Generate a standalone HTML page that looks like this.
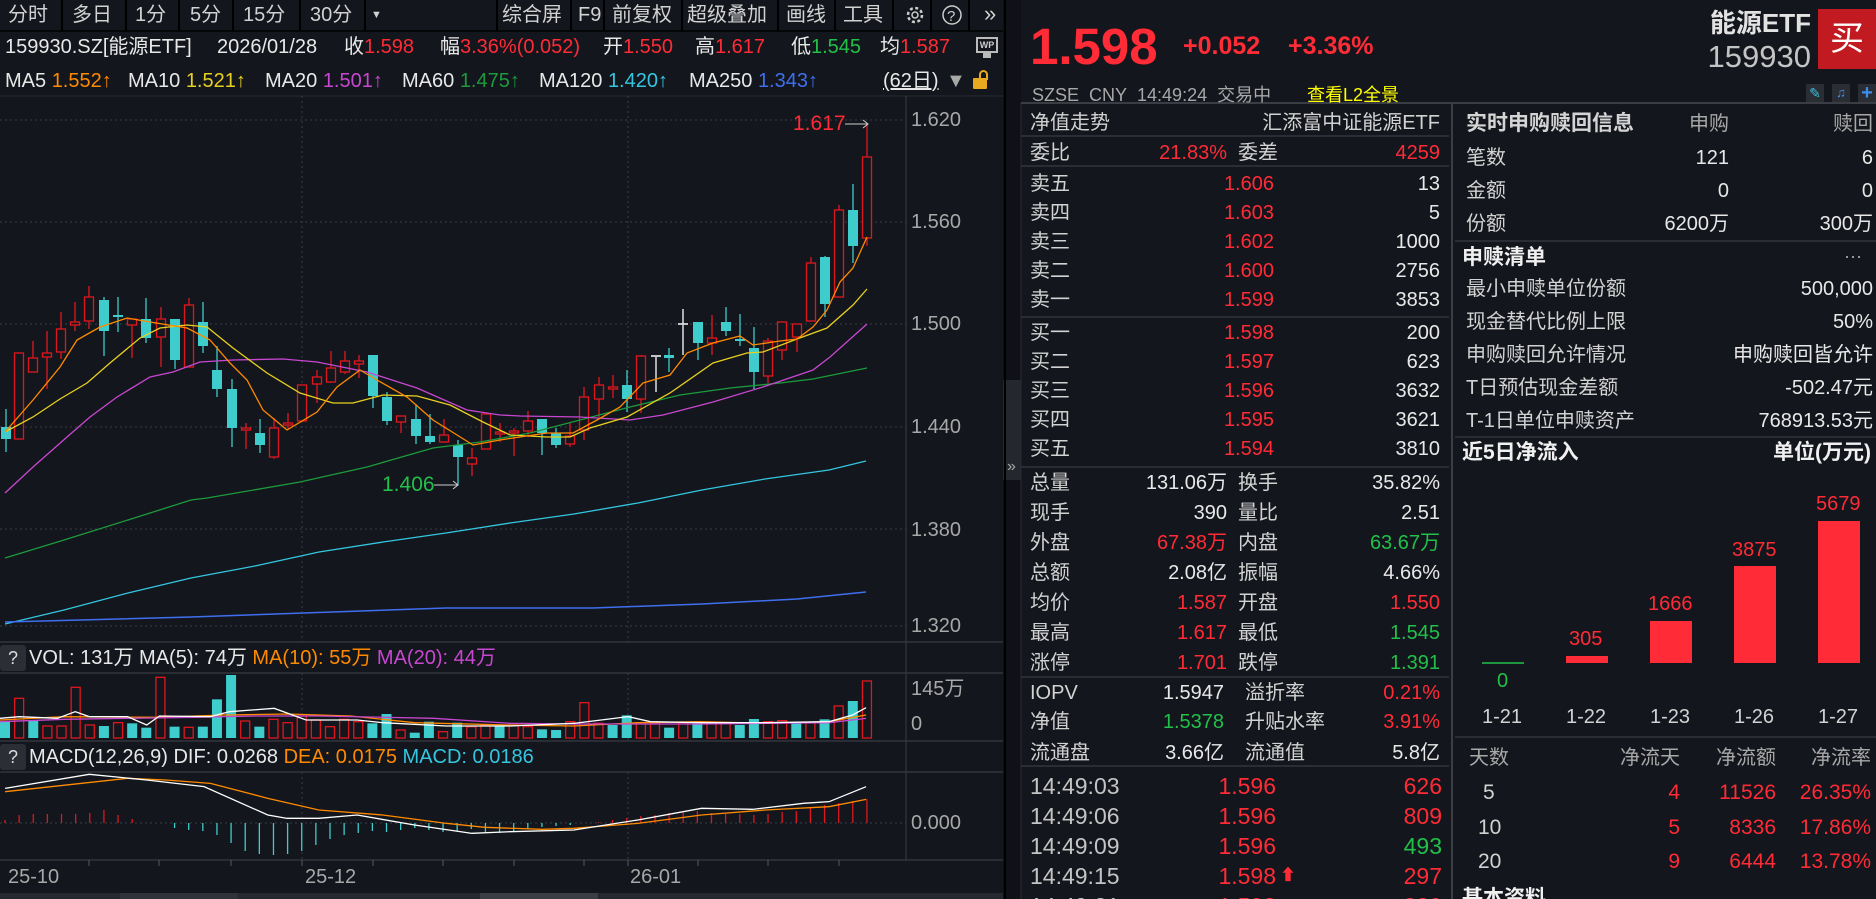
<!DOCTYPE html>
<html><head><meta charset="utf-8">
<style>
*{margin:0;padding:0;box-sizing:border-box}
html,body{width:1876px;height:899px;overflow:hidden;background:#13161c}
#wrap{position:relative;width:1876px;height:899px;overflow:hidden;background:#13161c;font-family:"Liberation Sans","Noto Sans CJK SC",sans-serif;color:#d2d2d2}
.t{position:absolute;white-space:nowrap;line-height:24px;height:24px;font-size:20px}
.r{text-align:right}
.red{color:#ff2b36}.grn{color:#22c04a}.wh{color:#e8e8e8}.gy{color:#a8a8a8}
.b{font-weight:bold}
.o{color:#ff8a00}.y{color:#e8d020}.m{color:#c847d0}.g6{color:#1d9a3c}.c{color:#34c6e0}.bl{color:#3f6ff0}
.q{position:absolute;width:26px;height:26px;background:#2b2e35;border-radius:3px;color:#ddd;font-size:18px;line-height:26px;text-align:center}
svg{position:absolute;left:0;top:0}
</style></head><body><div id="wrap">
<svg id="ch" width="1876" height="899"></svg>

<!-- toolbar -->
<div class="t" style="left:8px;top:3px">分时</div>
<div class="t" style="left:72px;top:3px">多日</div>
<div class="t" style="left:135px;top:3px">1分</div>
<div class="t" style="left:190px;top:3px">5分</div>
<div class="t" style="left:243px;top:3px">15分</div>
<div class="t" style="left:310px;top:3px">30分</div>
<div class="t" style="left:371px;top:3px;font-size:11px">▼</div>
<div class="t" style="left:502px;top:3px">综合屏</div>
<div class="t" style="left:578px;top:3px">F9</div>
<div class="t" style="left:612px;top:3px">前复权</div>
<div class="t" style="left:687px;top:3px">超级叠加</div>
<div class="t" style="left:786px;top:3px">画线</div>
<div class="t" style="left:843px;top:3px">工具</div>
<div class="t" style="left:984px;top:2px;font-size:22px">»</div>

<!-- info row -->
<div class="t wh" style="left:5px;top:35px">159930.SZ[能源ETF]</div>
<div class="t wh" style="left:217px;top:35px">2026/01/28</div>
<div class="t wh" style="left:344px;top:35px">收<span class="red">1.598</span></div>
<div class="t wh" style="left:440px;top:35px">幅<span class="red">3.36%(0.052)</span></div>
<div class="t wh" style="left:603px;top:35px">开<span class="red">1.550</span></div>
<div class="t wh" style="left:695px;top:35px">高<span class="red">1.617</span></div>
<div class="t wh" style="left:791px;top:35px">低<span class="grn">1.545</span></div>
<div class="t wh" style="left:880px;top:35px">均<span class="red">1.587</span></div>
<div style="position:absolute;left:976px;top:37px;width:22px;height:16px;border:2px solid #bbb;font-size:9px;line-height:12px;text-align:center;font-weight:bold;color:#ccc">WP</div>
<div style="position:absolute;left:983px;top:53px;width:8px;height:5px;background:#bbb"></div>

<!-- MA row -->
<div class="t wh" style="left:5px;top:69px">MA5 <span class="o">1.552↑</span></div>
<div class="t wh" style="left:128px;top:69px">MA10 <span class="y">1.521↑</span></div>
<div class="t wh" style="left:265px;top:69px">MA20 <span class="m">1.501↑</span></div>
<div class="t wh" style="left:402px;top:69px">MA60 <span class="g6">1.475↑</span></div>
<div class="t wh" style="left:539px;top:69px">MA120 <span class="c">1.420↑</span></div>
<div class="t wh" style="left:689px;top:69px">MA250 <span class="bl">1.343↑</span></div>
<div class="t wh" style="left:883px;top:69px;text-decoration:underline">(62日)</div>
<div class="t gy" style="left:946px;top:69px;font-size:20px">▼</div>
<div style="position:absolute;left:973px;top:78px;width:14px;height:11px;background:#e8a820;border-radius:1px"></div>
<div style="position:absolute;left:979px;top:70px;width:9px;height:10px;border:2px solid #e8a820;border-bottom:none;border-radius:5px 5px 0 0"></div>

<!-- axis labels -->
<div class="t gy" style="left:911px;top:108px">1.620</div>
<div class="t gy" style="left:911px;top:210px">1.560</div>
<div class="t gy" style="left:911px;top:312px">1.500</div>
<div class="t gy" style="left:911px;top:415px">1.440</div>
<div class="t gy" style="left:911px;top:518px">1.380</div>
<div class="t gy" style="left:911px;top:614px">1.320</div>
<div class="t red" style="left:793px;top:112px;font-size:21px">1.617</div>
<div class="t grn" style="left:382px;top:473px;font-size:21px">1.406</div>

<!-- vol header -->
<div class="q" style="left:0;top:645px">?</div>
<div class="t wh" style="left:29px;top:646px">VOL: 131万 MA(5): 74万 <span class="o">MA(10): 55万</span> <span class="m">MA(20): 44万</span></div>
<div class="t gy" style="left:911px;top:677px">145万</div>
<div class="t gy" style="left:911px;top:712px">0</div>
<div class="q" style="left:0;top:744px">?</div>
<div class="t wh" style="left:29px;top:745px">MACD(12,26,9) DIF: 0.0268 <span class="o">DEA: 0.0175</span> <span class="c">MACD: 0.0186</span></div>
<div class="t gy" style="left:911px;top:811px">0.000</div>
<div class="t gy" style="left:8px;top:865px">25-10</div>
<div class="t gy" style="left:305px;top:865px">25-12</div>
<div class="t gy" style="left:630px;top:865px">26-01</div>

<!-- right top -->
<div class="t red b" style="left:1030px;top:17px;font-size:51px;line-height:60px;height:60px">1.598</div>
<div class="t red b" style="left:1183px;top:32px;font-size:25px;line-height:28px;height:28px">+0.052</div>
<div class="t red b" style="left:1288px;top:32px;font-size:25px;line-height:28px;height:28px">+3.36%</div>
<div class="t r b" style="right:65px;top:8px;font-size:26px;line-height:30px;height:30px;color:#e2e2e2">能源ETF</div>
<div class="t r" style="right:65px;top:40px;font-size:31px;line-height:34px;height:34px;color:#c4c4c4">159930</div>
<div style="position:absolute;left:1818px;top:9px;width:58px;height:60px;background:#c11a20;color:#fff;font-size:34px;line-height:60px;text-align:center">买</div>
<div class="t gy" style="left:1032px;top:83px;font-size:18px">SZSE&nbsp; CNY&nbsp; 14:49:24&nbsp; 交易中</div>
<div class="t" style="left:1307px;top:83px;font-size:18px;color:#ffff00">查看L2全景</div>
<div style="position:absolute;left:1806px;top:84px;width:18px;height:18px;background:#2a2d33;color:#3ac0e0;font-size:14px;line-height:18px;text-align:center">✎</div>
<div style="position:absolute;left:1832px;top:84px;width:18px;height:18px;background:#2a2d33;color:#4a90e0;font-size:13px;line-height:18px;text-align:center">♫</div>
<div style="position:absolute;left:1858px;top:84px;width:18px;height:18px;background:#2a2d33;color:#3a8ef0;font-size:20px;line-height:18px;text-align:center;font-weight:bold">+</div>

<!-- order book -->
<div class="t" style="left:1030px;top:111px">净值走势</div>
<div class="t r" style="right:436px;top:111px">汇添富中证能源ETF</div>
<div class="t" style="left:1030px;top:141px">委比</div>
<div class="t r red" style="right:649px;top:141px">21.83%</div>
<div class="t" style="left:1238px;top:141px">委差</div>
<div class="t r red" style="right:436px;top:141px">4259</div>

<div class="t" style="left:1030px;top:172px">卖五</div><div class="t r red" style="right:602px;top:172px">1.606</div><div class="t r wh" style="right:436px;top:172px">13</div>
<div class="t" style="left:1030px;top:201px">卖四</div><div class="t r red" style="right:602px;top:201px">1.603</div><div class="t r wh" style="right:436px;top:201px">5</div>
<div class="t" style="left:1030px;top:230px">卖三</div><div class="t r red" style="right:602px;top:230px">1.602</div><div class="t r wh" style="right:436px;top:230px">1000</div>
<div class="t" style="left:1030px;top:259px">卖二</div><div class="t r red" style="right:602px;top:259px">1.600</div><div class="t r wh" style="right:436px;top:259px">2756</div>
<div class="t" style="left:1030px;top:288px">卖一</div><div class="t r red" style="right:602px;top:288px">1.599</div><div class="t r wh" style="right:436px;top:288px">3853</div>

<div class="t" style="left:1030px;top:321px">买一</div><div class="t r red" style="right:602px;top:321px">1.598</div><div class="t r wh" style="right:436px;top:321px">200</div>
<div class="t" style="left:1030px;top:350px">买二</div><div class="t r red" style="right:602px;top:350px">1.597</div><div class="t r wh" style="right:436px;top:350px">623</div>
<div class="t" style="left:1030px;top:379px">买三</div><div class="t r red" style="right:602px;top:379px">1.596</div><div class="t r wh" style="right:436px;top:379px">3632</div>
<div class="t" style="left:1030px;top:408px">买四</div><div class="t r red" style="right:602px;top:408px">1.595</div><div class="t r wh" style="right:436px;top:408px">3621</div>
<div class="t" style="left:1030px;top:437px">买五</div><div class="t r red" style="right:602px;top:437px">1.594</div><div class="t r wh" style="right:436px;top:437px">3810</div>

<div class="t" style="left:1030px;top:471px">总量</div><div class="t r wh" style="right:649px;top:471px">131.06万</div><div class="t" style="left:1238px;top:471px">换手</div><div class="t r wh" style="right:436px;top:471px">35.82%</div>
<div class="t" style="left:1030px;top:501px">现手</div><div class="t r wh" style="right:649px;top:501px">390</div><div class="t" style="left:1238px;top:501px">量比</div><div class="t r wh" style="right:436px;top:501px">2.51</div>
<div class="t" style="left:1030px;top:531px">外盘</div><div class="t r red" style="right:649px;top:531px">67.38万</div><div class="t" style="left:1238px;top:531px">内盘</div><div class="t r grn" style="right:436px;top:531px">63.67万</div>
<div class="t" style="left:1030px;top:561px">总额</div><div class="t r wh" style="right:649px;top:561px">2.08亿</div><div class="t" style="left:1238px;top:561px">振幅</div><div class="t r wh" style="right:436px;top:561px">4.66%</div>
<div class="t" style="left:1030px;top:591px">均价</div><div class="t r red" style="right:649px;top:591px">1.587</div><div class="t" style="left:1238px;top:591px">开盘</div><div class="t r red" style="right:436px;top:591px">1.550</div>
<div class="t" style="left:1030px;top:621px">最高</div><div class="t r red" style="right:649px;top:621px">1.617</div><div class="t" style="left:1238px;top:621px">最低</div><div class="t r grn" style="right:436px;top:621px">1.545</div>
<div class="t" style="left:1030px;top:651px">涨停</div><div class="t r red" style="right:649px;top:651px">1.701</div><div class="t" style="left:1238px;top:651px">跌停</div><div class="t r grn" style="right:436px;top:651px">1.391</div>

<div class="t" style="left:1030px;top:681px">IOPV</div><div class="t r wh" style="right:652px;top:681px">1.5947</div><div class="t" style="left:1245px;top:681px">溢折率</div><div class="t r red" style="right:436px;top:681px">0.21%</div>
<div class="t" style="left:1030px;top:710px">净值</div><div class="t r grn" style="right:652px;top:710px">1.5378</div><div class="t" style="left:1245px;top:710px">升贴水率</div><div class="t r red" style="right:436px;top:710px">3.91%</div>
<div class="t" style="left:1030px;top:741px">流通盘</div><div class="t r wh" style="right:652px;top:741px">3.66亿</div><div class="t" style="left:1245px;top:741px">流通值</div><div class="t r wh" style="right:436px;top:741px">5.8亿</div>

<div class="t" style="left:1030px;top:772px;font-size:23px;line-height:28px;height:28px;color:#c4c4c4">14:49:03</div><div class="t r red" style="right:600px;top:772px;font-size:23px;line-height:28px;height:28px">1.596</div><div class="t r red" style="right:434px;top:772px;font-size:23px;line-height:28px;height:28px">626</div>
<div class="t" style="left:1030px;top:802px;font-size:23px;line-height:28px;height:28px;color:#c4c4c4">14:49:06</div><div class="t r red" style="right:600px;top:802px;font-size:23px;line-height:28px;height:28px">1.596</div><div class="t r red" style="right:434px;top:802px;font-size:23px;line-height:28px;height:28px">809</div>
<div class="t" style="left:1030px;top:832px;font-size:23px;line-height:28px;height:28px;color:#c4c4c4">14:49:09</div><div class="t r red" style="right:600px;top:832px;font-size:23px;line-height:28px;height:28px">1.596</div><div class="t r grn" style="right:434px;top:832px;font-size:23px;line-height:28px;height:28px">493</div>
<div class="t" style="left:1030px;top:862px;font-size:23px;line-height:28px;height:28px;color:#c4c4c4">14:49:15</div><div class="t r red" style="right:600px;top:862px;font-size:23px;line-height:28px;height:28px">1.598</div><div class="t red" style="left:1280px;top:862px;font-size:16px;line-height:28px">⬆</div><div class="t r red" style="right:434px;top:862px;font-size:23px;line-height:28px;height:28px">297</div>
<div class="t" style="left:1030px;top:892px;font-size:23px;line-height:28px;height:28px;color:#c4c4c4">14:49:21</div><div class="t r red" style="right:600px;top:892px;font-size:23px;line-height:28px;height:28px">1.598</div><div class="t r red" style="right:434px;top:892px;font-size:23px;line-height:28px;height:28px">300</div>

<!-- right column -->
<div class="t b" style="left:1466px;top:111px;font-size:21px;line-height:26px;color:#d4d4d4">实时申购赎回信息</div>
<div class="t r gy" style="right:147px;top:112px">申购</div>
<div class="t r gy" style="right:3px;top:112px">赎回</div>
<div class="t" style="left:1466px;top:146px">笔数</div><div class="t r wh" style="right:147px;top:146px">121</div><div class="t r wh" style="right:3px;top:146px">6</div>
<div class="t" style="left:1466px;top:179px">金额</div><div class="t r wh" style="right:147px;top:179px">0</div><div class="t r wh" style="right:3px;top:179px">0</div>
<div class="t" style="left:1466px;top:212px">份额</div><div class="t r wh" style="right:147px;top:212px">6200万</div><div class="t r wh" style="right:3px;top:212px">300万</div>
<div class="t b" style="left:1462px;top:245px;font-size:21px;line-height:26px;color:#f0f0f0">申赎清单</div>
<div class="t r gy" style="right:14px;top:244px;font-size:18px">···</div>
<div class="t" style="left:1466px;top:277px">最小申赎单位份额</div><div class="t r wh" style="right:3px;top:277px">500,000</div>
<div class="t" style="left:1466px;top:310px">现金替代比例上限</div><div class="t r wh" style="right:3px;top:310px">50%</div>
<div class="t" style="left:1466px;top:343px">申购赎回允许情况</div><div class="t r wh" style="right:3px;top:343px">申购赎回皆允许</div>
<div class="t" style="left:1466px;top:376px">T日预估现金差额</div><div class="t r wh" style="right:3px;top:376px">-502.47元</div>
<div class="t" style="left:1466px;top:409px">T-1日单位申赎资产</div><div class="t r wh" style="right:3px;top:409px">768913.53元</div>
<div class="t b" style="left:1462px;top:440px;font-size:21px;line-height:26px;color:#f0f0f0">近5日净流入</div>
<div class="t r b" style="right:5px;top:440px;font-size:21px;line-height:26px;color:#f0f0f0">单位(万元)</div>

<div class="t grn" style="left:1497px;top:669px">0</div>
<div class="t red" style="left:1569px;top:627px">305</div>
<div class="t red" style="left:1648px;top:592px">1666</div>
<div class="t red" style="left:1732px;top:538px">3875</div>
<div class="t red" style="left:1816px;top:492px">5679</div>
<div class="t" style="left:1482px;top:705px">1-21</div>
<div class="t" style="left:1566px;top:705px">1-22</div>
<div class="t" style="left:1650px;top:705px">1-23</div>
<div class="t" style="left:1734px;top:705px">1-26</div>
<div class="t" style="left:1818px;top:705px">1-27</div>

<div class="t gy" style="left:1469px;top:746px">天数</div>
<div class="t r gy" style="right:196px;top:746px">净流天</div>
<div class="t r gy" style="right:100px;top:746px">净流额</div>
<div class="t r gy" style="right:5px;top:746px">净流率</div>
<div class="t" style="left:1483px;top:781px;font-size:21px">5</div><div class="t r red" style="right:196px;top:781px;font-size:21px">4</div><div class="t r red" style="right:100px;top:781px;font-size:21px">11526</div><div class="t r red" style="right:5px;top:781px;font-size:21px">26.35%</div>
<div class="t" style="left:1478px;top:816px;font-size:21px">10</div><div class="t r red" style="right:196px;top:816px;font-size:21px">5</div><div class="t r red" style="right:100px;top:816px;font-size:21px">8336</div><div class="t r red" style="right:5px;top:816px;font-size:21px">17.86%</div>
<div class="t" style="left:1478px;top:850px;font-size:21px">20</div><div class="t r red" style="right:196px;top:850px;font-size:21px">9</div><div class="t r red" style="right:100px;top:850px;font-size:21px">6444</div><div class="t r red" style="right:5px;top:850px;font-size:21px">13.78%</div>
<div class="t b" style="left:1462px;top:886px;font-size:21px;line-height:26px;color:#f0f0f0">基本资料</div>
<div class="t gy" style="left:1007px;top:455px;font-size:16px">»</div>

<script>
const NS='http://www.w3.org/2000/svg',svg=document.getElementById('ch');
function el(n,a){const e=document.createElementNS(NS,n);for(const k in a)e.setAttribute(k,a[k]);svg.appendChild(e);return e;}
function R(x,y,w,h,f,s){el('rect',{x,y,width:w,height:h,fill:f||'none',stroke:s||'none','stroke-width':1.3});}
function L(x1,y1,x2,y2,c,w,d){const a={x1,y1,x2,y2,stroke:c,'stroke-width':w||1};if(d)a['stroke-dasharray']=d;el('line',a);}
function P(pts,c,w){el('polyline',{points:pts.map(p=>p.join(',')).join(' '),fill:'none',stroke:c,'stroke-width':w||1.3});}
const z5=a=>a.map(([x,y])=>[x/1.568,440+y/3]);
R(1003,0,18,899,'#0f1116');R(1003,380,18,100,'#24272d');
L(1005,0,1005,899,'#000',2);L(1021,103,1021,899,'#2a2d33',1);
L(0,31,1003,31,'#000',1.5);L(0,96,1003,96,'#2a2d33',1);
[62,126,179,233,300,365,497,571,604,682,778,835,893,931,969].forEach(x=>L(x,0,x,31,'#000',2));
L(906,96,906,860,'#3a3d44',1);
[642,673,741,772,860].forEach(y=>L(0,y,1003,y,'#33363d',1.5));
[120,222,324,427,529,626].forEach(y=>L(0,y,906,y,'#3a3d45',1,'2 3'));
[302,628].forEach(x=>{L(x,96,x,642,'#3a3d45',1,'2 3');L(x,673,x,741,'#3a3d45',1,'2 3');L(x,772,x,860,'#3a3d45',1,'2 3');});
L(0,823,906,823,'#3a3d45',1,'2 3');
[89,159,231,302,373,443,514,584,628,698,768,839].forEach(x=>L(x,860,x,866,'#55585f',1));
R(0,893,1003,6,'#25282e');R(120,893,118,6,'#2f3238');R(480,893,118,6,'#3a3d44');
el('circle',{cx:915,cy:15,r:7,fill:'none',stroke:'#ccc','stroke-width':2.5,'stroke-dasharray':'3 2.5'});
el('circle',{cx:915,cy:15,r:3,fill:'none',stroke:'#ccc','stroke-width':1.5});
el('circle',{cx:952,cy:15,r:9,fill:'none',stroke:'#ccc','stroke-width':1.5});
const qt=el('text',{x:947,y:21,fill:'#ccc','font-size':15,'font-family':'Liberation Sans'});qt.textContent='?';
const C=[[6,427,439,409,452,'c'],[19,353,439,353,439,'r'],[33,358,372,341,372,'r'],[47,353,357,331,389,'r'],[61,329,352,312,359,'r'],[75,322,325,302,331,'r'],[89,297,321,286,329,'r'],[104,300,331,297,356,'c'],[118,315,317,297,332,'c'],[132,319,325,319,358,'r'],[146,319,338,298,343,'c'],[161,319,337,307,367,'r'],[175,319,360,319,369,'c'],[189,305,367,298,367,'r'],[203,322,346,302,353,'c'],[217,370,389,346,397,'c'],[232,389,428,379,447,'c'],[246,428,430,423,449,'r'],[260,433,445,419,453,'c'],[274,428,457,418,459,'r'],[288,423,425,413,430,'r'],[302,385,421,385,421,'r'],[317,377,384,370,403,'r'],[331,368,382,351,383,'r'],[345,361,372,351,374,'r'],[359,361,364,355,378,'r'],[373,355,396,355,408,'c'],[387,397,421,392,425,'c'],[401,416,422,416,433,'r'],[416,419,436,404,444,'c'],[430,436,442,414,444,'c'],[444,435,442,419,442,'r'],[458,445,457,440,485,'c'],[472,458,464,448,476,'r'],[486,414,449,414,449,'r'],[500,432,434,423,442,'r'],[514,431,432,428,456,'r'],[528,421,431,411,437,'r'],[542,419,433,419,455,'c'],[556,433,445,428,448,'c'],[570,436,444,423,447,'r'],[584,397,430,387,440,'r'],[599,385,399,377,417,'r'],[613,387,389,375,398,'r'],[627,385,399,370,412,'c'],[641,356,399,355,413,'r'],[656,356,357,356,392,'w'],[669,355,358,348,372,'c'],[683,324,325,309,355,'w'],[698,322,343,322,360,'c'],[712,338,343,315,355,'r'],[726,322,331,307,336,'c'],[740,339,341,314,346,'c'],[754,348,372,327,389,'c'],[768,341,376,338,383,'r'],[782,322,350,322,360,'r'],[797,324,337,324,352,'r'],[811,263,321,257,321,'r'],[825,257,304,256,317,'c'],[839,210,297,205,297,'r'],[853,210,246,184,263,'c'],[867,157,238,123,246,'r']];
C.forEach(([x,t,b,h,l,k])=>{const col=k=='r'?'#e0161e':k=='c'?'#3ecccc':'#ffffff';
 L(x,h,x,t,col,1.3);L(x,b,x,l,col,1.3);
 if(k=='w'){L(x-5,t,x+5,t,col,1.5);}
 else if(k=='c'){R(x-5,t,10,Math.max(b-t,2),col);}
 else{R(x-4.5,t,9,Math.max(b-t,2),'#13161c',col);}
});
P([[5,624],[64,610],[128,593],[191,578],[255,566],[319,552],[383,542],[446,533],[510,523],[574,514],[638,503],[702,490],[765,479],[829,470],[866,461]],'#34c6e0');
P([[5,622],[191,617],[446,608],[593,608],[702,604],[797,599],[866,592]],'#3f6ff0',1.5);
P([[5,558],[64,540],[128,520],[191,500],[207,498],[300,482],[367,467],[433,448],[480,442],[530,433],[580,420],[630,407],[680,395],[730,388],[780,383],[813,379],[867,368]],'#1d9a3c');
P([[5,493],[33,467],[67,437],[90,417],[117,397],[150,377],[173,372],[200,362],[233,360],[283,359],[317,362],[367,372],[417,388],[467,410],[500,415],[520,416],[580,417],[630,420],[663,415],[713,402],[763,387],[813,370],[830,357],[867,324]],'#c847d0');
P([[5,432],[33,417],[60,399],[87,383],[110,363],[140,338],[160,328],[187,325],[207,327],[233,348],[267,373],[300,393],[333,403],[353,403],[383,395],[417,396],[450,405],[483,422],[510,435],[547,437],[570,437],[590,428],[627,417],[670,393],[713,363],[747,353],[763,352],[797,339],[827,328],[853,305],[867,289]],'#e8d020');
P([[5,432],[33,400],[60,367],[77,340],[100,327],[127,318],[150,322],[187,328],[210,340],[230,363],[247,380],[263,410],[287,430],[317,412],[337,387],[360,370],[377,380],[407,397],[433,420],[473,445],[500,440],[513,438],[547,433],[573,433],[597,420],[620,407],[643,383],[670,375],[687,353],[713,343],[740,336],[753,345],[780,341],[797,339],[813,327],[827,310],[840,282],[853,268],[867,237]],'#ff8a00');
L(434,485,458,485,'#ccc',1);P([[453,481],[458,485],[453,489]],'#ccc',1);
L(845,124,868,124,'#ccc',1);P([[863,120],[868,124],[863,128]],'#ccc',1);
const V=[['c',843],['r',775],['c',840],['r',858],['r',858],['r',742],['r',855],['c',858],['r',848],['c',850],['c',863],['r',712],['c',860],['r',862],['c',860],['c',778],['c',705],['r',843],['c',860],['r',838],['r',848],['r',828],['r',840],['r',860],['r',838],['r',845],['c',850],['c',822],['r',870],['c',878],['c',845],['r',875],['c',848],['r',860],['r',855],['c',858],['r',855],['r',860],['c',868],['c',870],['r',845],['r',788],['r',850],['c',855],['c',826],['r',848],['r',850],['c',863],['r',848],['c',850],['r',848],['r',850],['c',855],['c',837],['r',845],['r',842],['c',848],['r',848],['c',838],['r',798],['c',783],['r',723]];
V.forEach(([k,yz],i)=>{const x=5+14.13*i,t=440+yz/3,b=738;
 if(k=='c')R(x-5,t,10,b-t,'#3ecccc');else R(x-4.5,t,9,b-t,'#13161c','#e0161e');});
P(z5([[0,840],[100,830],[250,832],[350,825],[450,822],[550,828],[650,848],[800,855],[900,858],[1000,848],[1100,845],[1200,850],[1300,845],[1358,825]]),'#ff8a00');
P(z5([[0,845],[100,838],[300,832],[400,828],[500,828],[680,835],[800,850],[900,852],[1100,852],[1300,848],[1358,835]]),'#c847d0');
P(z5([[0,835],[30,830],[90,835],[118,815],[140,830],[200,830],[230,855],[250,828],[330,830],[360,815],[430,805],[480,840],[560,840],[600,848],[700,858],[800,858],[900,850],[985,830],[1020,845],[1100,848],[1200,848],[1300,845],[1337,825],[1358,803]]),'#fff');
const H=[3,8,9,9,9,9,10,13,8,4,0,0,-5,-7,-8,-12,-20,-28,-31,-32,-31,-28,-22,-16,-12,-10,-8,-9,-7,-5,-7,-9,-8,-6,-9,-10,-8,-6,-4,-3,-2,0,1,3,5,7,8,10,11,12,10,9,9,8,9,11,12,15,18,20,22,24];
H.forEach((h,i)=>{const x=5+14.13*i;if(h)L(x,823,x,823-h,h>0?'#e0161e':'#3ecccc',1.3);});
P(z5([[8,1055],[200,1015],[260,1020],[330,1030],[420,1075],[500,1110],[600,1125],[700,1150],[760,1162],[850,1168],[900,1165],[1000,1150],[1100,1125],[1200,1110],[1300,1100],[1358,1078]]),'#ff8a00');
P(z5([[8,1045],[140,1003],[230,1020],[320,1040],[420,1125],[450,1135],[500,1135],[560,1125],[650,1155],[740,1180],[800,1175],[900,1170],[1000,1140],[1100,1105],[1180,1108],[1260,1090],[1300,1085],[1358,1040]]),'#fff');
L(1021,103,1876,103,'#3a3d44',2);
L(1452,103,1452,899,'#3a3d44',2);
[136,166,317,467,677,766].forEach(y=>L(1021,y,1449,y,'#33363d',1.5));
[241,437,737].forEach(y=>L(1455,y,1876,y,'#33363d',1.5));
L(1482,663,1524,663,'#22c04a',1.5);
R(1566,656,42,7,'#ff2b36');R(1650,621,42,42,'#ff2b36');R(1734,566,42,97,'#ff2b36');R(1818,521,42,142,'#ff2b36');
</script>
</div></body></html>
